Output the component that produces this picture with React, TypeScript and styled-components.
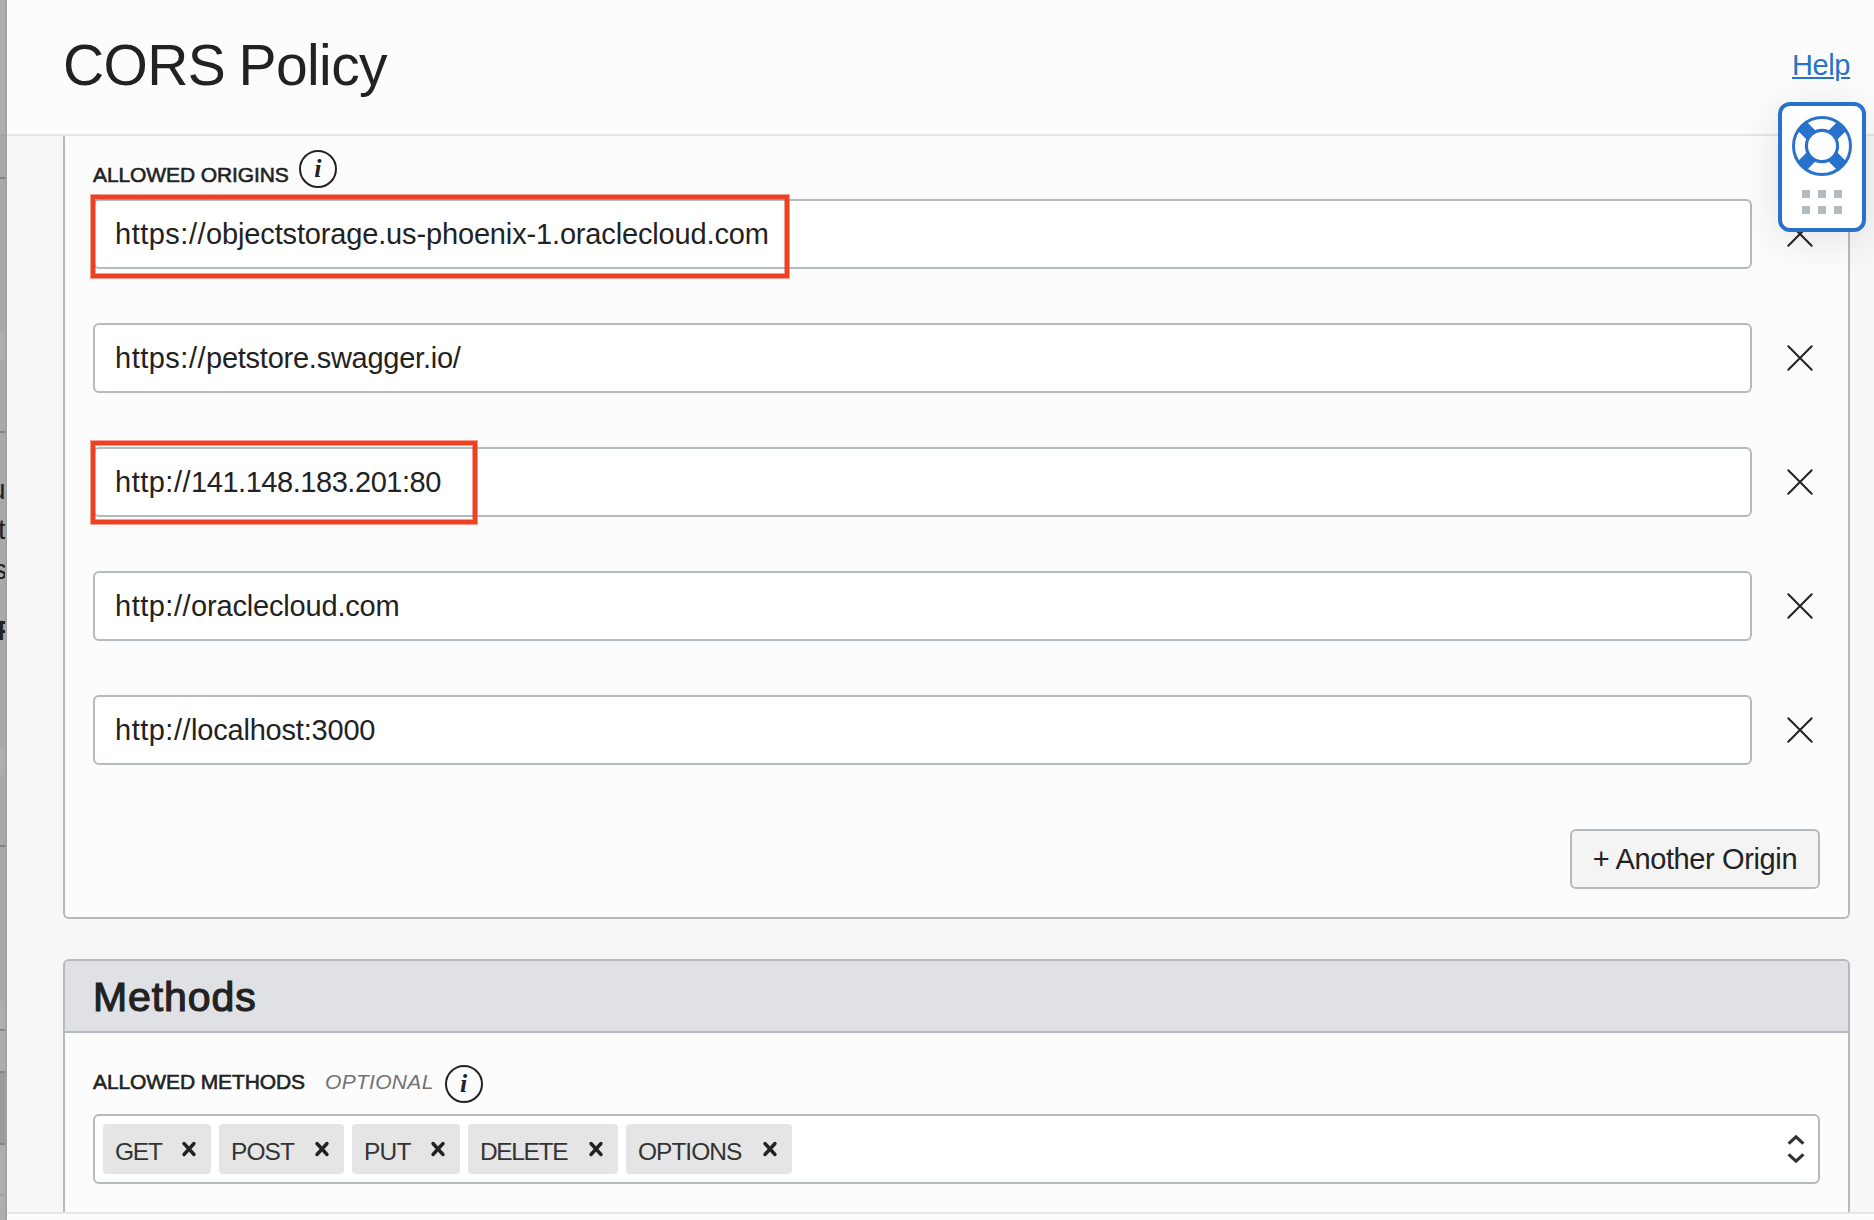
import React from "react";
import styled, { createGlobalStyle } from "styled-components";

const ink = "#222222";
const line = "#b5b9c0";
const blue = "#2972cb";

const GlobalStyle = createGlobalStyle`
  *, *::before, *::after { box-sizing: border-box; }
  body {
    margin: 0;
    overflow: hidden;
    color: ${ink};
    font-family: "Liberation Sans", Arial, sans-serif;
    font-size: 29px;
  }
`;

const Screen = styled.div`
  display: flex;
  width: 1874px;
  height: 1220px;
  overflow: hidden;
  position: relative;
`;

/* Dimmed page that peeks out to the left of the drawer */
const Backdrop = styled.aside`
  display: flex;
  flex-direction: column;
  flex: none;
  width: 7px;
  border-right: 2px solid #a2a2a2;
  background: #a9a9a9;
  overflow: hidden;
`;

const Slice = styled.div<{ $h: number; $bg?: string }>`
  flex: none;
  height: ${(p) => p.$h}px;
  background: ${(p) => p.$bg ?? "#a9a9a9"};
  overflow: hidden;
`;

const SliceText = styled.div<{ $top?: number; $shift: number; $bold?: boolean }>`
  height: 40px;
  margin-top: ${(p) => p.$top ?? 0}px;
  margin-left: ${(p) => p.$shift}px;
  font-size: 28px;
  line-height: 40px;
  font-weight: ${(p) => (p.$bold ? 700 : 400)};
`;

const Drawer = styled.main`
  display: flex;
  flex-direction: column;
  flex: 1;
  min-width: 0;
  background: #fcfcfc;
`;

const Header = styled.header`
  display: flex;
  justify-content: space-between;
  align-items: center;
  flex: none;
  height: 136px;
  padding: 0 24px 4px 56px;
  border-bottom: 2px solid #e6e6e6;
`;

const Title = styled.h1`
  margin: 0;
  font-size: 57px;
  font-weight: 400;
  line-height: 66px;
  letter-spacing: -0.6px;
  word-spacing: -2px;
`;

const HelpLink = styled.a`
  color: ${blue};
  font-size: 29px;
  line-height: 34px;
  letter-spacing: -0.4px;
  text-decoration: underline;
  text-decoration-thickness: 2px;
  text-underline-offset: 2px;
`;

const Body = styled.div`
  flex: 1;
  min-height: 0;
  display: flex;
  flex-direction: column;
  gap: 40px;
  padding: 0 24px 0 56px;
  background: #f7f7f7;
  overflow: hidden;
`;

const Footer = styled.footer`
  flex: none;
  height: 8px;
  border-top: 2px solid #e6e6e6;
`;

const Card = styled.section<{ $cut?: boolean }>`
  flex: none;
  border: 2px solid ${line};
  border-radius: 6px;
  background: #fcfcfc;
  ${(p) => p.$cut && "border-top: 0; border-top-left-radius: 0; border-top-right-radius: 0;"}
`;

const CardHead = styled.h2`
  display: flex;
  align-items: center;
  height: 72px;
  margin: 0;
  padding: 3px 28px 0;
  border-bottom: 2px solid ${line};
  border-radius: 4px 4px 0 0;
  background: #e0e1e5;
  font-size: 41px;
  font-weight: 400;
  letter-spacing: 0.9px;
  -webkit-text-stroke: 1.2px ${ink};
`;

const CardBody = styled.div<{ $top: number; $bottom: number }>`
  display: flex;
  flex-direction: column;
  padding: ${(p) => p.$top}px 28px ${(p) => p.$bottom}px;
`;

const LabelRow = styled.div<{ $drop: number }>`
  display: flex;
  height: 38px;
  margin-bottom: 11px;
  font-size: 21px;
  line-height: 24px;
  letter-spacing: -0.1px;
  & > span { margin-top: ${(p) => p.$drop}px; }
`;

const Label = styled.span`
  -webkit-text-stroke: 0.6px ${ink};
`;

const Optional = styled.span`
  margin-left: 20px;
  color: #737373;
  font-style: italic;
  letter-spacing: 0.3px;
`;

const InfoCircle = styled.i<{ $gap: number }>`
  display: flex;
  justify-content: center;
  width: 38px;
  height: 38px;
  margin-left: ${(p) => p.$gap}px;
  border: 2px solid ${ink};
  border-radius: 50%;
  font: italic 700 26px/34px "Liberation Serif", "Times New Roman", serif;
`;

const Rows = styled.div`
  display: flex;
  flex-direction: column;
  gap: 54px;
`;

const Row = styled.div`
  display: flex;
  align-items: center;
  gap: 35px;
  padding-right: 7px;
`;

const Field = styled.div<{ $tracking: number }>`
  position: relative;
  display: flex;
  align-items: center;
  flex: 1;
  height: 70px;
  padding: 1px 21px 0 20px;
  border: 2px solid ${line};
  border-radius: 6px;
  background: #fff;
  white-space: nowrap;
  letter-spacing: ${(p) => p.$tracking}px;
`;

const Scheme = styled.span`
  letter-spacing: 0.5px;
`;

const Highlight = styled.div<{ $w: number; $top: number }>`
  position: absolute;
  left: -4px;
  top: ${(p) => p.$top}px;
  width: ${(p) => p.$w}px;
  height: 83px;
  border: 4px solid #ee4023;
  box-shadow: 0 0 0 1px rgba(238, 64, 35, 0.5), inset 0 0 0 1px rgba(238, 64, 35, 0.5);
`;

const IconButton = styled.button`
  display: flex;
  padding: 0;
  border: 0;
  background: none;
  color: ${ink};
`;

const AddButton = styled.button`
  align-self: flex-end;
  width: 250px;
  height: 60px;
  margin-top: 64px;
  padding: 1px 0 0;
  border: 2px solid ${line};
  border-radius: 6px;
  background: #f4f4f4;
  color: ${ink};
  font: inherit;
  letter-spacing: -0.38px;
  white-space: nowrap;
`;

const Select = styled.div`
  display: flex;
  align-items: center;
  gap: 8px;
  height: 70px;
  padding: 0 13px 0 8px;
  border: 2px solid ${line};
  border-radius: 6px;
  background: #fff;
  & > svg { margin-left: auto; }
`;

const Chip = styled.div<{ $w: number; $tracking: number }>`
  display: flex;
  align-items: center;
  justify-content: space-between;
  width: ${(p) => p.$w}px;
  height: 50px;
  padding: 0 14px 0 12px;
  border-radius: 4px;
  background: #e5e5e5;
  color: #333;
  font-size: 24.5px;
  letter-spacing: ${(p) => p.$tracking}px;
  & > span { padding-top: 5px; }
`;

const HelpWidget = styled.div`
  position: absolute;
  left: 1778px;
  top: 102px;
  display: flex;
  flex-direction: column;
  align-items: center;
  gap: 14px;
  width: 88px;
  height: 130px;
  padding-top: 10px;
  border: 4px solid ${blue};
  border-radius: 12px;
  background: #fff;
  box-shadow: 0 8px 44px rgba(0, 0, 0, 0.1);
`;

const Dots = styled.div`
  display: grid;
  grid-template-columns: repeat(3, 8px);
  grid-auto-rows: 8px;
  gap: 8px;
`;

const Dot = styled.span`
  background: #b5b9c0;
`;

const CrossIcon = () => (
  <svg width="26" height="26" viewBox="0 0 26 26" fill="none" stroke="currentColor" strokeWidth="2" strokeLinecap="round">
    <path d="M1.3 1.3 24.7 24.7M24.7 1.3 1.3 24.7" />
  </svg>
);

const ChipCross = () => (
  <svg width="16" height="16" viewBox="0 0 16 16" fill="none" stroke={ink} strokeWidth="3.4" strokeLinecap="round">
    <path d="M3 2.5 13 13.5M13 2.5 3 13.5" />
  </svg>
);

const Chevrons = () => (
  <svg width="18" height="30" viewBox="0 0 18 30" fill="none" stroke="#333" strokeWidth="3.2">
    <path d="M1.6 9.6 9 2.8 16.4 9.6M1.6 20.4 9 27.2 16.4 20.4" />
  </svg>
);

const LifeRing = () => (
  <svg width="60" height="60" viewBox="-30 -30 60 60" fill="none" stroke={blue}>
    <circle r="28.5" strokeWidth="3" />
    <path d="M-11-11-19.5-19.5M11-11 19.5-19.5M-11 11-19.5 19.5M11 11 19.5 19.5" strokeWidth="12.5" />
    <circle r="15.6" strokeWidth="3.2" />
  </svg>
);

const origins = [
  { scheme: "https://", host: "objectstorage.us-phoenix-1.oraclecloud.com", mark: { w: 698, top: -6 }, tracking: -0.15 },
  { scheme: "https://", host: "petstore.swagger.io/", tracking: -0.25 },
  { scheme: "http://", host: "141.148.183.201:80", mark: { w: 386, top: -8 }, tracking: -0.45 },
  { scheme: "http://", host: "oraclecloud.com", tracking: -0.18 },
  { scheme: "http://", host: "localhost:3000", tracking: -0.2 },
];

const methods = [
  { name: "GET", w: 108, tracking: -1.2 },
  { name: "POST", w: 125, tracking: -0.9 },
  { name: "PUT", w: 108, tracking: -0.8 },
  { name: "DELETE", w: 150, tracking: -1.35 },
  { name: "OPTIONS", w: 166, tracking: -1 },
];

export default function App() {
  return (
    <Screen>
      <GlobalStyle />
      <Backdrop>
        <Slice $h={134} $bg="#aeaeae" />
        <Slice $h={2} $bg="#a0a0a0" />
        <Slice $h={41} />
        <Slice $h={2} $bg="#80858a" />
        <Slice $h={153} />
        <Slice $h={28} $bg="#aeaeae" />
        <Slice $h={71} />
        <Slice $h={2} $bg="#80858a" />
        <Slice $h={314}>
          <SliceText $top={37} $shift={-10}>u</SliceText>
          <SliceText $shift={-2}>t</SliceText>
          <SliceText $shift={-7}>s</SliceText>
          <SliceText $top={21} $shift={-3} $bold>F</SliceText>
        </Slice>
        <Slice $h={28} $bg="#aeaeae" />
        <Slice $h={70} />
        <Slice $h={2} $bg="#80858a" />
        <Slice $h={154} />
        <Slice $h={28} $bg="#aeaeae" />
        <Slice $h={2} $bg="#80858a" />
        <Slice $h={40} $bg="#acacac" />
        <Slice $h={2} $bg="#80858a" />
        <Slice $h={70} $bg="#9a9c9e" />
        <Slice $h={2} $bg="#80858a" />
        <Slice $h={49} $bg="#aeaeae" />
        <Slice $h={2} $bg="#a0a0a0" />
        <Slice $h={24} $bg="#aeaeae" />
      </Backdrop>

      <Drawer>
        <Header>
          <Title>CORS Policy</Title>
          <HelpLink>Help</HelpLink>
        </Header>

        <Body>
          <Card $cut>
            <CardBody $top={14} $bottom={28}>
              <LabelRow $drop={13}>
                <Label>ALLOWED ORIGINS</Label>
                <InfoCircle $gap={10}>i</InfoCircle>
              </LabelRow>
              <Rows>
                {origins.map((o) => (
                  <Row key={o.host}>
                    <Field $tracking={o.tracking}>
                      <Scheme>{o.scheme}</Scheme>
                      {o.host}
                      {o.mark && <Highlight $w={o.mark.w} $top={o.mark.top} />}
                    </Field>
                    <IconButton aria-label="Remove">
                      <CrossIcon />
                    </IconButton>
                  </Row>
                ))}
              </Rows>
              <AddButton>+ Another Origin</AddButton>
            </CardBody>
          </Card>

          <Card>
            <CardHead>Methods</CardHead>
            <CardBody $top={32} $bottom={60}>
              <LabelRow $drop={5}>
                <Label>ALLOWED METHODS</Label>
                <Optional>OPTIONAL</Optional>
                <InfoCircle $gap={11}>i</InfoCircle>
              </LabelRow>
              <Select>
                {methods.map((m) => (
                  <Chip key={m.name} $w={m.w} $tracking={m.tracking}>
                    <span>{m.name}</span>
                    <ChipCross />
                  </Chip>
                ))}
                <Chevrons />
              </Select>
            </CardBody>
          </Card>
        </Body>
        <Footer />
      </Drawer>

      <HelpWidget>
        <LifeRing />
        <Dots>
          {[0, 1, 2, 3, 4, 5].map((n) => (
            <Dot key={n} />
          ))}
        </Dots>
      </HelpWidget>
    </Screen>
  );
}
